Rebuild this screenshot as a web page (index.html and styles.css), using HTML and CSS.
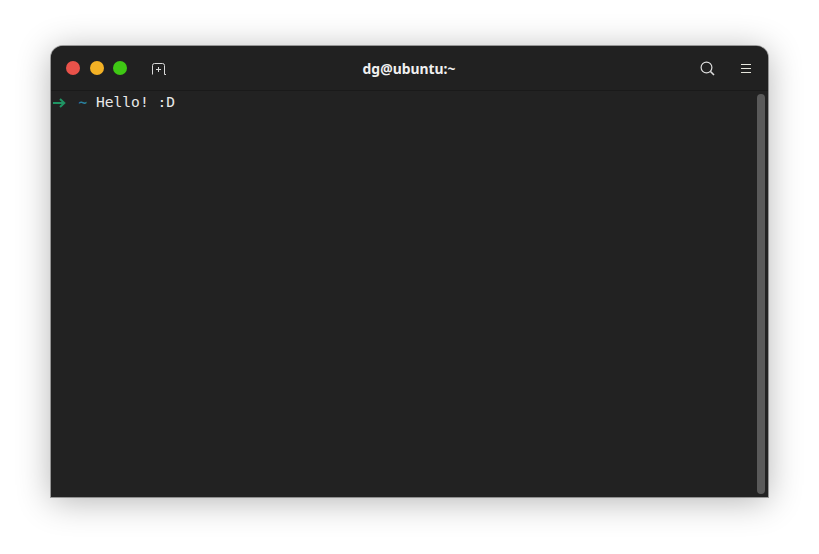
FILE: index.html
```html
<!DOCTYPE html>
<html lang="en">
<head>
<meta charset="utf-8">
<title>dg@ubuntu:~</title>
<link rel="stylesheet" href="styles.css">
</head>
<body>
<main class="window">
  <header class="titlebar">
    <div class="left">
      <div class="lights">
        <span class="light red"></span>
        <span class="light yellow"></span>
        <span class="light green"></span>
      </div>
      <svg class="newtab" width="16" height="14" viewBox="0 0 16 14" fill="none" stroke="#d8d8d8" stroke-width="1">
        <path d="M1.5 12.5V3.5Q1.5 1.5 3.5 1.5H11.5Q13.5 1.5 13.5 3.5V12.5H15"/>
        <path d="M7.5 5V10M5 7.5H10"/>
      </svg>
    </div>
    <h1 class="title">dg@ubuntu:~</h1>
    <div class="right">
      <svg width="15" height="15" viewBox="0 0 15 15" fill="none" stroke="#dcdcdc" stroke-width="1.2">
        <circle cx="6.5" cy="6.5" r="5.4"/>
        <path d="M10.5 10.5L14 14" stroke-width="1.6"/>
      </svg>
      <svg width="12" height="10" viewBox="0 0 12 10" fill="none" stroke="#e6e6dc" stroke-width="1">
        <path d="M1 .5H11M1 4.5H11M1 8.5H11"/>
      </svg>
    </div>
  </header>
  <section class="body">
    <div class="terminal"><svg class="arrow" width="13" height="10" viewBox="0 0 13 10" fill="none" stroke="#1f9463" stroke-width="2"><path d="M0 5H11M7 1L11.3 5L7 9"/></svg>  <span class="tilde">~</span> Hello! :D</div>
    <div class="scrollbar"><div class="thumb"></div></div>
  </section>
</main>
</body>
</html>
```
FILE: styles.css
```css
* { box-sizing: border-box; }
html, body { margin: 0; height: 100%; background: #fff; }
body { padding: 46px 51px 57px 51px; height: 554px; overflow: hidden; }
.window {
  height: 451px;
  display: flex;
  flex-direction: column;
  background: #222;
  border-radius: 12px 12px 0 0;
  box-shadow: 0 0 0 1px rgba(90,90,90,.55), 0 4px 34px rgba(0,0,0,.3);
  overflow: hidden;
}
.titlebar {
  flex: 0 0 45px;
  display: grid;
  grid-template-columns: 1fr auto 1fr;
  align-items: center;
  padding: 0 16px 0 15px;
  background: #212121;
  border-bottom: 1px solid #1a1a1a;
}
.left { display: flex; align-items: center; gap: 24px; }
.lights { display: flex; gap: 9.5px; }
.light { width: 14px; height: 14px; border-radius: 50%; }
.red { background: #e9524a; }
.yellow { background: #f3b125; }
.green { background: #3fc814; }
.newtab { margin-top: 1px; }
.title {
  margin: 0;
  font: 700 13.9px "Noto Sans", sans-serif;
  color: #f0f0f0;
}
.right { display: flex; align-items: center; justify-content: flex-end; gap: 25.5px; }
.right svg:last-child { margin-top: 1px; }
.body { flex: 1; display: flex; min-height: 0; }
.terminal {
  flex: 1;
  padding: 2px 0 0 1px;
  font: 14.6px/18px "DejaVu Sans Mono", monospace;
  color: #e8e8e8;
  white-space: pre;
}
.arrow { display: inline-block; margin: 0 -5.2px -1px 1px; }
.tilde { color: #2a7f9e; font-weight: 700; }
.scrollbar { flex: 0 0 13px; padding: 3px 3px 3px 2px; }
.thumb { height: 100%; border-radius: 4px; background: #5a5a5a; }
```
